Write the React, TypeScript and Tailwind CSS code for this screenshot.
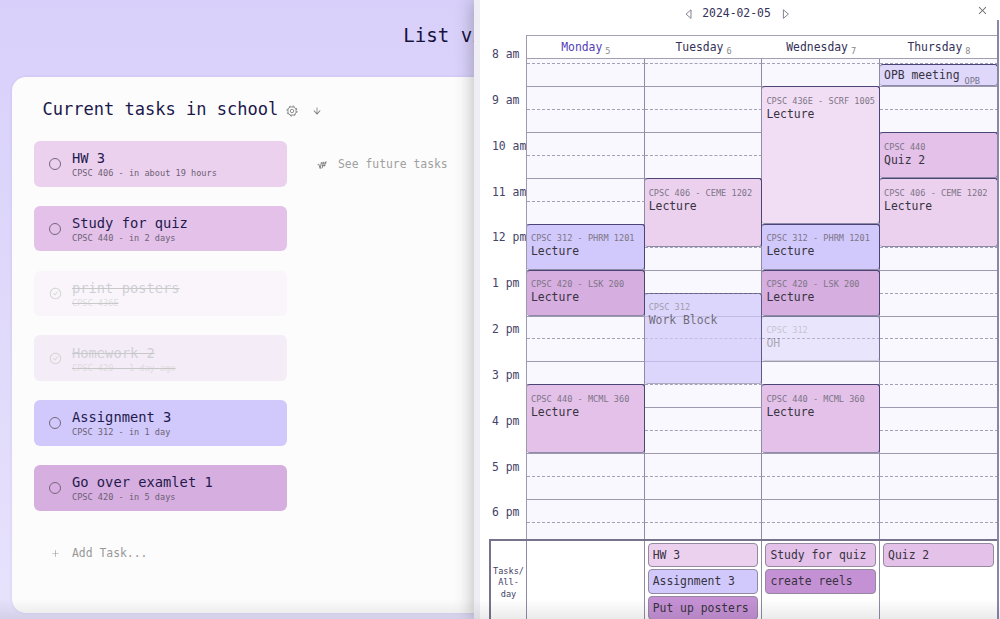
import { AiOutlineArrowDown, AiOutlineCheckCircle, AiOutlineClose, AiOutlinePlus } from "react-icons/ai";

const tasks = [
  { title: "HW 3", sub: "CPSC 406 - in about 19 hours", bg: "bg-[#ecd1ef]" },
  { title: "Study for quiz", sub: "CPSC 440 - in 2 days", bg: "bg-[#e3c1e9]" },
  { title: "print posters", sub: "CPSC 436E", bg: "bg-[#f2def4]", done: true },
  { title: "Homework 2", sub: "CPSC 420 - 1 day ago", bg: "bg-[#d6aedf]", done: true },
  { title: "Assignment 3", sub: "CPSC 312 - in 1 day", bg: "bg-[#d1c9fb]" },
  { title: "Go over examlet 1", sub: "CPSC 420 - in 5 days", bg: "bg-[#d6aedf]" },
];

const hours = ["8 am", "9 am", "10 am", "11 am", "12 pm", "1 pm", "2 pm", "3 pm", "4 pm", "5 pm", "6 pm"];
const days = [
  { name: "Monday", num: 5, color: "text-[#5340b8]" },
  { name: "Tuesday", num: 6, color: "text-[#353158]" },
  { name: "Wednesday", num: 7, color: "text-[#353158]" },
  { name: "Thursday", num: 8, color: "text-[#353158]" },
];

// Grid row 2 is the first visible half hour; every later row is another half hour.
const events = [
  { place: "col-start-1 row-start-9 row-span-2", bg: "bg-[#d1c9fb]", top: "CPSC 312 - PHRM 1201", title: "Lecture" },
  { place: "col-start-1 row-start-11 row-span-2", bg: "bg-[#d6aedf]", top: "CPSC 420 - LSK 200", title: "Lecture" },
  { place: "col-start-1 row-start-16 row-span-3", bg: "bg-[#e3c1e9]", top: "CPSC 440 - MCML 360", title: "Lecture" },
  { place: "col-start-2 row-start-7 row-span-3", bg: "bg-[#ecd1ef]", top: "CPSC 406 - CEME 1202", title: "Lecture" },
  { place: "col-start-2 row-start-12 row-span-4 opacity-70", bg: "bg-[#d1c9fb]", top: "CPSC 312", title: "Work Block" },
  { place: "col-start-3 row-start-3 row-span-6", bg: "bg-[#f2def4]", top: "CPSC 436E - SCRF 1005", title: "Lecture" },
  { place: "col-start-3 row-start-9 row-span-2", bg: "bg-[#d1c9fb]", top: "CPSC 312 - PHRM 1201", title: "Lecture" },
  { place: "col-start-3 row-start-11 row-span-2", bg: "bg-[#d6aedf]", top: "CPSC 420 - LSK 200", title: "Lecture" },
  { place: "col-start-3 row-start-13 row-span-2 opacity-40", bg: "bg-[#d1c9fb]", top: "CPSC 312", title: "OH" },
  { place: "col-start-3 row-start-16 row-span-3", bg: "bg-[#e3c1e9]", top: "CPSC 440 - MCML 360", title: "Lecture" },
  { place: "col-start-4 row-start-5 row-span-2", bg: "bg-[#e3c1e9]", top: "CPSC 440", title: "Quiz 2" },
  { place: "col-start-4 row-start-7 row-span-3", bg: "bg-[#ecd1ef]", top: "CPSC 406 - CEME 1202", title: "Lecture" },
];

const allDay = [
  [],
  [
    { title: "HW 3", bg: "bg-[#ecd1ef]" },
    { title: "Assignment 3", bg: "bg-[#d1c9fb]" },
    { title: "Put up posters", bg: "bg-[#c591d5]" },
  ],
  [
    { title: "Study for quiz", bg: "bg-[#e3c1e9]" },
    { title: "create reels", bg: "bg-[#c591d5]" },
  ],
  [{ title: "Quiz 2", bg: "bg-[#e3c1e9]" }],
];

function GearIcon() {
  return (
    <svg className="mr-[14px] size-[12px]" viewBox="0 0 12 12" fill="none" stroke="#777">
      <circle cx="6" cy="6" r="4.1" strokeWidth="0.8" />
      <circle cx="6" cy="6" r="5" strokeWidth="1" strokeDasharray="1.9 2.027" />
      <circle cx="6" cy="6" r="1.7" strokeWidth="0.8" />
    </svg>
  );
}

function TaskList() {
  return (
    <main className="h-full w-[898px] shrink-0 pl-[12px]">
      <h1 className="flex h-[77px] items-center justify-center pb-[4px] text-[19.1px] text-[#17133f]">List view</h1>
      <section className="h-[536px] rounded-[14px] bg-[#fcfcfc] pl-[22px] shadow-[0_0_3px_rgba(80,60,160,0.12)]">
        <div className="flex h-[64px] items-center pt-[3px] pl-[8.5px] text-[17.05px] text-[#1b174b]">
          <h2 className="mr-[8px] pb-px">Current tasks in school</h2>
          <GearIcon />
          <AiOutlineArrowDown className="size-[10px] text-[#777]" />
        </div>
        <div className="flex">
          <div className="flex w-[252.5px] flex-col gap-[19.2px]">
            {tasks.map((t) => (
              <div
                key={t.title}
                className={`flex h-[45.6px] items-center rounded-[6px] pl-[15px] ${t.bg} ${t.done ? "opacity-20" : ""}`}
              >
                {t.done ? (
                  <AiOutlineCheckCircle className="size-[13px] text-[#333]" />
                ) : (
                  <span className="size-[12px] rounded-full border border-[#75687c]" />
                )}
                <div className={`flex flex-col pt-[2px] ${t.done ? "ml-[10px] line-through" : "ml-[11px]"}`}>
                  <span className="text-[13.75px] leading-[17px] text-[#1f1a4d]">{t.title}</span>
                  <span className="text-[8.6px] leading-[12px] text-[#6c6175]">{t.sub}</span>
                </div>
              </div>
            ))}
            <div className="flex items-center pt-[15px] pl-[17px] text-[11.4px] text-[#999]">
              <AiOutlinePlus className="mr-[12px] size-[9px]" />
              Add Task...
            </div>
          </div>
          <div className="flex h-[46px] items-center pt-[2px] pl-[30.5px] text-[11.4px] text-[#a0a0a0]">
            <svg className="mr-[11px] size-[10px]" viewBox="0 0 10 10" fill="none" stroke="#777" strokeWidth="0.9">
              <path d="M.6 4.6 1.8 4.2 3.2 8.6 4.4 2.2M4.2 3H9.4M4.8 5.4H8.4M6.6 1.8 5 8.4M9.2 1.2 7 6.6" />
            </svg>
            See future tasks
          </div>
        </div>
      </section>
    </main>
  );
}

function WeekGrid() {
  return (
    <div className="grid h-[480px] grid-cols-[repeat(4,117.7px)] grid-rows-[4.4px_repeat(20,22.925px)_17px] overflow-hidden bg-[#faf8ff]">
      {Array.from({ length: 22 }, (_, r) =>
        [1, 2, 3, 4].map((c) => (
          <div
            key={`${r}-${c}`}
            style={{ gridRow: r + 1, gridColumn: c }}
            className={`border-r border-r-[#8f8ba6] ${
              r === 0 ? "" : r % 2 ? "border-t border-dashed border-t-[#a5a1b5] [border-right-style:solid]" : "border-t border-t-[#9d99ae]"
            }`}
          />
        )),
      )}
      <div className="col-start-4 row-start-2 mt-px flex items-center rounded-[3px] border-t border-r border-b border-[#4a4574] border-b-[#8f8aa8] bg-[#dfd8fb] pt-px pl-[4px] text-[11.4px] text-[#37333f]">
        OPB meeting<span className="mt-[12px] ml-[5px] text-[8.6px] text-[#77728a]">OPB</span>
      </div>
      {events.map((e) => (
        <div
          key={e.place}
          className={`rounded-[3px] border-t border-r border-b border-[#4a4574] border-b-[#8f8aa8] pt-[7.5px] pl-[4px] ${e.bg} ${e.place}`}
        >
          <div className="text-[8.6px] leading-[13px] whitespace-nowrap text-[#7d7587]">{e.top}</div>
          <div className="text-[11.4px] leading-[13px] text-[#37333f]">{e.title}</div>
        </div>
      ))}
    </div>
  );
}

function CalendarPanel() {
  return (
    <aside className="absolute inset-y-0 left-[474px] flex w-[526px] flex-col overflow-hidden border-l-[6px] border-[#efeef4] bg-white shadow-[-2px_0_16px_rgba(0,0,0,0.25)]">
      <header className="flex h-[35px] shrink-0 items-start">
        <div className="flex flex-1 items-center justify-center gap-[9px] pt-[5px] pl-[16px] text-[11.4px] text-[#353158]">
          <svg className="size-[10px]" viewBox="0 0 10 10" fill="none" stroke="#66637c" strokeWidth="0.8">
            <path d="M8 .8v8.6L3 5.1Z" />
          </svg>
          2024-02-05
          <svg className="size-[10px]" viewBox="0 0 10 10" fill="none" stroke="#66637c" strokeWidth="0.8">
            <path d="M3.4.8v8.6L8.4 5.1Z" />
          </svg>
        </div>
        <AiOutlineClose className="mt-[5px] mr-[12px] size-[11px] text-[#666]" />
      </header>
      <div className="flex h-[504px] shrink-0">
        <div className="w-[46px] shrink-0 pt-[8px] pl-[12px] text-[11.4px] text-[#464268]">
          {hours.map((h) => (
            <div key={h} className="h-[45.85px] leading-[22px] whitespace-nowrap">
              {h}
            </div>
          ))}
        </div>
        <div className="border-l border-[#9d99ae]">
          <div className="flex h-[24px] border-y border-[#a3a0b2]">
            {days.map((d) => (
              <div key={d.name} className={`flex w-[117.7px] items-center justify-center pt-[2px] text-[11.4px] ${d.color}`}>
                {d.name}
                <span className="mt-[6px] ml-[3px] text-[8.6px] text-[#888]">{d.num}</span>
              </div>
            ))}
          </div>
          <WeekGrid />
        </div>
      </div>
      <div className="ml-[9px] flex h-[80px] w-[509px] shrink-0 overflow-hidden border-t-2 border-l-2 border-[#77738c]">
        <div className="flex w-[35px] shrink-0 items-center justify-center pt-[6px] text-center text-[8.6px] leading-[11.6px] text-[#464268]">
          Tasks/
          <br />
          All-
          <br />
          day
        </div>
        {allDay.map((items, i) => (
          <div key={i} className="flex w-[117.7px] shrink-0 flex-col gap-[2px] border-l border-[#8f8ba6] px-[3px] pt-[2px]">
            {items.map((t) => (
              <div
                key={t.title}
                className={`h-[24.3px] shrink-0 rounded-[4px] border border-[#94899f] pl-[4px] text-[11.4px] leading-[22px] whitespace-nowrap text-[#37333f] ${t.bg}`}
              >
                {t.title}
              </div>
            ))}
          </div>
        ))}
      </div>
      <div className="absolute top-[20px] right-px bottom-0 w-[2px] bg-[#8a86a8]" />
    </aside>
  );
}

export default function App() {
  return (
    <div className="relative h-[619px] w-[1000px] overflow-hidden bg-linear-to-b from-[#d8d0fa] to-[#e7e2fc] font-['DejaVu_Sans_Mono',monospace]">
      <TaskList />
      <CalendarPanel />
      <div className="pointer-events-none absolute inset-x-0 bottom-0 h-[20px] bg-linear-to-b from-transparent to-black/8" />
    </div>
  );
}
